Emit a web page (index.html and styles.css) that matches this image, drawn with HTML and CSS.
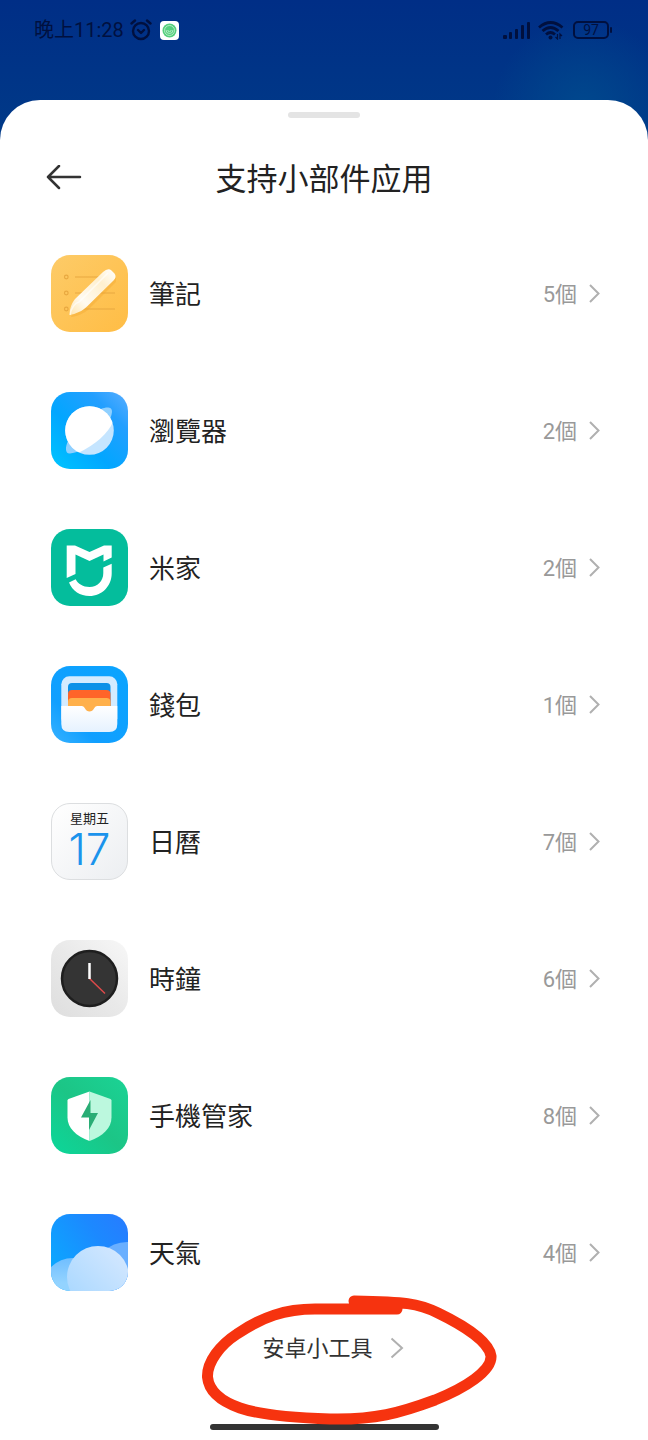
FILE: index.html
```html
<!DOCTYPE html>
<html lang="zh-Hant">
<head>
<meta charset="utf-8">
<meta name="viewport" content="width=device-width, initial-scale=1">
<title>支持小部件应用</title>
<link rel="stylesheet" href="styles.css">
</head>
<body>
<div class="screen">
  <header class="status">
    <div class="status-side">
      <span class="time">晚上11:28</span>
      <svg class="alarm" viewBox="0 0 22 22" width="22" height="22" fill="none" stroke="currentColor" stroke-width="2.400" stroke-linecap="round" stroke-linejoin="round"><circle cx="11" cy="12" r="8"/><path d="M8 11l3 3 3-3M1.500 4.500L5 1.500M20.500 4.500L17 1.500"/></svg>
      <svg class="badge" viewBox="0 0 19 19" width="19" height="19"><rect width="19" height="19" rx="4" fill="#fff"/><circle cx="9.500" cy="9.500" r="7" fill="#55cf7d"/><g fill="none" stroke="#c9f2d5" stroke-width=".8"><circle cx="9.500" cy="9.500" r="5"/><path d="M6 9a3.500 3.500 0 1 0 7 0M7.800 9a1.700 1.700 0 1 0 3.400 0"/></g></svg>
    </div>
    <div class="status-side">
      <svg viewBox="0 0 28 20" width="28" height="20" fill="currentColor"><rect x="0" y="15" width="4" height="4" rx="1"/><rect x="6" y="12" width="3" height="7" rx="1"/><rect x="12" y="9" width="3" height="10" rx="1"/><rect x="18" y="5" width="3" height="14" rx="1"/><rect x="24" y="2" width="3" height="17" rx="1"/></svg>
      <svg viewBox="0 0 28 20" width="28" height="20" fill="none" stroke="currentColor" stroke-width="2.800"><path d="M2 7.500Q13.500-2.500 25.500 7.500M5.500 11Q13.500 4 21.500 11M9 14.500Q13.500 10.500 18 14.500"/><circle cx="13.500" cy="17.500" r="2" fill="currentColor" stroke="none"/><path stroke-width="1.200" d="M20.500 14v5l-2-2M23 19v-5l2 2"/></svg>
      <span class="battery"><span class="battery-body">97</span><span class="battery-tip"></span></span>
    </div>
  </header>

  <main class="sheet">
    <div class="handle"></div>
    <div class="titlebar">
      <button class="back" type="button" aria-label="返回">
        <svg viewBox="0 0 36 26" width="36" height="26" fill="none" stroke="currentColor" stroke-width="2.500" stroke-linecap="round" stroke-linejoin="round"><path d="M34 12H2M13 1L2 12l11 11"/></svg>
      </button>
      <h1 class="title" lang="zh-Hans">支持小部件应用</h1>
    </div>

    <ul class="apps">
      <li><a class="app" href="#notes">
        <svg class="icon" viewBox="0 0 77 77">
          <defs><linearGradient id="n1" x2="1" y2="1"><stop stop-color="#fdcb68"/><stop offset="1" stop-color="#ffbd45"/></linearGradient><linearGradient id="n2" x1="0" y1="1" x2="1" y2="0"><stop stop-color="#ffe6b0"/><stop offset=".3" stop-color="#fffaf0"/><stop offset=".7" stop-color="#fff0cf"/><stop offset="1" stop-color="#fff"/></linearGradient></defs>
          <rect width="77" height="77" rx="19" fill="url(#n1)"/>
          <g fill="none" stroke="#e8a840" stroke-width="1.200"><circle cx="15.300" cy="22" r="1.800"/><circle cx="15.300" cy="38" r="1.800"/><circle cx="15.300" cy="54" r="1.800"/><path d="M24 22h40M24 38h40M24 54h40"/></g>
          <path d="M20 62C25 62 34 58 38 54L65 27V23L24 50z" fill="#f0a32c" opacity=".35"/>
          <path d="M19 60C18 56 20 49 24 44L52 17Q57 12.500 60.500 15.500L63.500 18.500Q66 22 62.500 25.500L36 51.500C32 56 24 59 19 60z" fill="url(#n2)"/>
          <path d="M19 60C20 53 24 48 28 47L57 18" fill="none" stroke="#fff" stroke-width="1.500" opacity=".6"/>
        </svg>
        <span class="name">筆記</span><span class="count">5個</span><svg class="chev" viewBox="0 0 11 19"><path d="M1 1l8.500 8.500L1 18"/></svg></a></li>
      <li><a class="app" href="#browser">
        <svg class="icon" viewBox="0 0 77 77">
          <defs><linearGradient id="b1" x1="0" y1="1" x2="1" y2="0"><stop stop-color="#00c6ff"/><stop offset=".4" stop-color="#02a6ff"/><stop offset=".75" stop-color="#239fff"/><stop offset="1" stop-color="#5aaeff"/></linearGradient><clipPath id="b2"><path d="M0 0H70L62.500 29Q54 48 27 61L0 70z"/></clipPath></defs>
          <rect width="77" height="77" rx="19" fill="url(#b1)"/>
          <path d="M17 49C14 55 14 62 19 61.500C34 61 60 34 61 20C61.500 15 56 14.500 50 17z" fill="#8fd0ff"/>
          <circle cx="38.500" cy="38.500" r="24.300" fill="#c5e5ff"/>
          <circle cx="38.500" cy="38.500" r="24.300" fill="#fff" clip-path="url(#b2)"/>
        </svg>
        <span class="name">瀏覽器</span><span class="count">2個</span><svg class="chev" viewBox="0 0 11 19"><path d="M1 1l8.500 8.500L1 18"/></svg></a></li>
      <li><a class="app" href="#home">
        <svg class="icon" viewBox="0 0 77 77">
          <rect width="77" height="77" rx="19" fill="#04bd9c"/>
          <path fill="#fff" d="M15.700 16.500H24L38.500 23 53 16.500h7.700v12l-8.200 4v-7L38.500 32l-14-6.500V45l-8.800 4zM18 53.500l6.700-3.200C27 55 32 58 38.500 58c8 0 13.800-6 13.800-14v-5.500l8.400-3.800v9.800C60.700 57 51 67 38.500 67 29 67 21.500 62 18 53.500z"/>
        </svg>
        <span class="name">米家</span><span class="count">2個</span><svg class="chev" viewBox="0 0 11 19"><path d="M1 1l8.500 8.500L1 18"/></svg></a></li>
      <li><a class="app" href="#wallet">
        <svg class="icon" viewBox="0 0 77 77">
          <defs><linearGradient id="w1" x1="0" y1="1" x2="1" y2="0"><stop stop-color="#38b2ff"/><stop offset=".3" stop-color="#119fff"/><stop offset="1" stop-color="#0aa4ff"/></linearGradient><linearGradient id="w2" x2="0" y2="1"><stop stop-color="#fff"/><stop offset="1" stop-color="#e5f2ff"/></linearGradient></defs>
          <rect width="77" height="77" rx="19" fill="url(#w1)"/>
          <rect x="10.300" y="10.300" width="56" height="50" rx="8" fill="#d4ebff"/>
          <path d="M17 42V21q0-4 4-4h34.500q4 0 4 4v21z" fill="#0b91e8"/>
          <path d="M17 42V28q0-4 4-4h34.500q4 0 4 4v14z" fill="#ff6429"/>
          <path d="M17 46V36q0-4 4-4h34.500q4 0 4 4v10z" fill="#ffb04b"/>
          <path d="M10.300 40H31q2 0 3 2.500 1.500 3 4.500 3t4.500-3Q44 40 46 40h20.300v18q0 8-8 8h-40q-8 0-8-8z" fill="url(#w2)"/>
        </svg>
        <span class="name">錢包</span><span class="count">1個</span><svg class="chev" viewBox="0 0 11 19"><path d="M1 1l8.500 8.500L1 18"/></svg></a></li>
      <li><a class="app" href="#calendar">
        <span class="icon calendar"><span class="weekday">星期五</span><span class="day">17</span></span>
        <span class="name">日曆</span><span class="count">7個</span><svg class="chev" viewBox="0 0 11 19"><path d="M1 1l8.500 8.500L1 18"/></svg></a></li>
      <li><a class="app" href="#clock">
        <svg class="icon" viewBox="0 0 77 77">
          <defs><linearGradient id="k1" x1="0" y1="1" x2="1" y2="0"><stop stop-color="#dedede"/><stop offset=".5" stop-color="#e9e9e9"/><stop offset="1" stop-color="#f7f7f7"/></linearGradient></defs>
          <rect width="77" height="77" rx="19" fill="url(#k1)"/>
          <circle cx="38.500" cy="38.500" r="27.500" fill="#343434" stroke="#1e1e1e" stroke-width="2.500"/>
          <path d="M38.500 38.500L54 53.500" stroke="#dd4a4a" stroke-width="1.500"/>
          <path d="M38.500 23v16" stroke="#fff" stroke-width="2.500"/>
        </svg>
        <span class="name">時鐘</span><span class="count">6個</span><svg class="chev" viewBox="0 0 11 19"><path d="M1 1l8.500 8.500L1 18"/></svg></a></li>
      <li><a class="app" href="#security">
        <svg class="icon" viewBox="0 0 77 77">
          <defs><linearGradient id="s1" x1="0" y1="1" x2="1" y2="0"><stop stop-color="#0bd79a"/><stop offset=".5" stop-color="#1cc586"/><stop offset="1" stop-color="#1bd395"/></linearGradient></defs>
          <rect width="77" height="77" rx="19" fill="url(#s1)"/>
          <path d="M38.500 14.500L17.500 22q-1 .5-1 1.500v17C16.500 51 25 59 38.500 64z" fill="#fff"/>
          <path d="M38.500 14.500L59.500 22q1 .5 1 1.500v17C60.500 51 52 59 38.500 64z" fill="#bcf8de"/>
          <path d="M39.500 23L30 40.500h8V53l9-17h-7.500z" fill="#29ad75"/>
        </svg>
        <span class="name">手機管家</span><span class="count">8個</span><svg class="chev" viewBox="0 0 11 19"><path d="M1 1l8.500 8.500L1 18"/></svg></a></li>
      <li><a class="app" href="#weather">
        <svg class="icon" viewBox="0 0 77 77">
          <defs><linearGradient id="t1" x1="0" y1=".7" x2="1" y2="0"><stop stop-color="#0ba8ff"/><stop offset=".6" stop-color="#1c89ff"/><stop offset="1" stop-color="#287bff"/></linearGradient><linearGradient id="t2" x1="0" y1="1" x2="1" y2="0"><stop stop-color="#a4d6ff"/><stop offset="1" stop-color="#d8e9ff"/></linearGradient><linearGradient id="t4" x2="0" y2="1"><stop stop-color="#70beff"/><stop offset=".4" stop-color="#93d3ff"/></linearGradient><clipPath id="t3"><rect width="77" height="77" rx="19"/></clipPath></defs>
          <g clip-path="url(#t3)"><rect width="77" height="77" fill="url(#t1)"/><circle cx="76" cy="62" r="34" fill="#69afff"/><circle cx="22" cy="75" r="31" fill="url(#t4)"/><circle cx="47" cy="63" r="31" fill="url(#t2)"/></g>
        </svg>
        <span class="name">天氣</span><span class="count">4個</span><svg class="chev" viewBox="0 0 11 19"><path d="M1 1l8.500 8.500L1 18"/></svg></a></li>
    </ul>

    <footer class="footer">
      <a class="more" href="#android"><span class="more-label">安卓小工具</span><svg class="chev chev-large" viewBox="0 0 14 22"><path d="M1.500 1.500L12 11 1.500 20.500"/></svg></a>
      <svg class="marker" viewBox="0 0 320 155" aria-hidden="true"><path d="M207 24H125C95 24 72 32 47 49 30 60 17 77 17.500 92 19 108 33 117 50 123c23 8 60 10 90 11 45 1 70-6 105-19 30-12 57-29 56-44C299 57 275 41 248 28 228 18 215 17 164 16"/></svg>
      <div class="home"></div>
    </footer>
  </main>
</div>
</body>
</html>
```
FILE: styles.css
```css
* { box-sizing: border-box; }

body {
  margin: 0;
  font-family: Roboto, "Noto Sans CJK TC", "Noto Sans CJK SC", sans-serif;
  color: #222;
}

.screen {
  min-height: 100vh;
  display: flex;
  flex-direction: column;
  background:
    radial-gradient(circle at 90% 108px, #00488d 0, rgba(0, 72, 141, 0) 90px),
    linear-gradient(#002e86, #003a88 140px);
}

.status {
  height: 100px;
  padding: 18px 36px 0 34px;
  display: flex;
  justify-content: space-between;
  align-items: flex-start;
  color: #00103f;
}

.status-side {
  height: 24px;
  display: flex;
  align-items: center;
  gap: 6px;
}

.time { font-size: 20px; line-height: 24px; }
.badge { margin-left: 2px; }

.battery { display: flex; align-items: center; gap: 1px; margin-left: 2px; }
.battery-body {
  width: 36px;
  height: 18px;
  border: 2px solid currentColor;
  border-radius: 5px;
  font-size: 14px;
  line-height: 14px;
  text-align: center;
}
.battery-tip { width: 2px; height: 6px; border-radius: 1px; background: currentColor; }

.sheet {
  flex: 1;
  display: flex;
  flex-direction: column;
  padding-top: 12px;
  background: #fff;
  border-radius: 40px 40px 0 0;
}

.handle {
  width: 72px;
  height: 6px;
  margin: 0 auto;
  border-radius: 3px;
  background: #e4e4e4;
}

.titlebar {
  height: 107px;
  padding: 12px 46px 0;
  display: grid;
  grid-template-columns: 36px 1fr 36px;
  align-items: center;
}

.back {
  display: flex;
  padding: 0;
  border: 0;
  background: none;
  color: #333;
}

.title {
  margin: 0;
  padding-bottom: 2px;
  font: 400 31px/44px "Noto Sans CJK SC", sans-serif;
  text-align: center;
}

.apps { list-style: none; margin: 0; padding: 0; }

.app {
  height: 137px;
  padding: 0 48px 0 51px;
  display: flex;
  align-items: center;
  color: inherit;
  text-decoration: none;
}

.icon { width: 77px; height: 77px; flex: none; }
.name { flex: 1; margin-left: 21px; padding-top: 2px; font-size: 26px; line-height: 38px; }
.count { padding-top: 2px; font-size: 22px; line-height: 32px; color: #999; }

.chev {
  width: 11px;
  height: 19px;
  margin-left: 12px;
  fill: none;
  stroke: #b0b0b0;
  stroke-width: 2;
}
.chev-large { width: 14px; height: 22px; margin-left: 17px; }

.calendar {
  display: flex;
  flex-direction: column;
  align-items: center;
  padding-top: 7px;
  border: 1px solid #dcdee0;
  border-radius: 19px;
  background: linear-gradient(135deg, #fff, #eceef1);
}
.weekday { font-size: 13px; line-height: 16px; color: #222; }
.day { font-family: Inter, sans-serif; font-size: 44px; line-height: 44px; font-weight: 300; color: #1b93ec; }

.footer {
  position: relative;
  flex: 1;
  padding: 7px 0 10px 18px;
  display: flex;
  flex-direction: column;
  align-items: center;
  justify-content: space-between;
}

.more {
  display: flex;
  align-items: center;
  height: 40px;
  color: #333;
  text-decoration: none;
}
.more-label { padding-top: 2px; font-size: 22px; line-height: 32px; }

.marker {
  position: absolute;
  left: calc(50% - 134px);
  bottom: 0;
  width: 320px;
  height: 155px;
  fill: none;
  stroke: #f6330f;
  stroke-width: 11;
  stroke-linecap: round;
  pointer-events: none;
}

.home {
  width: 229px;
  height: 6px;
  margin-right: 18px;
  border-radius: 3px;
  background: #333;
}
```
